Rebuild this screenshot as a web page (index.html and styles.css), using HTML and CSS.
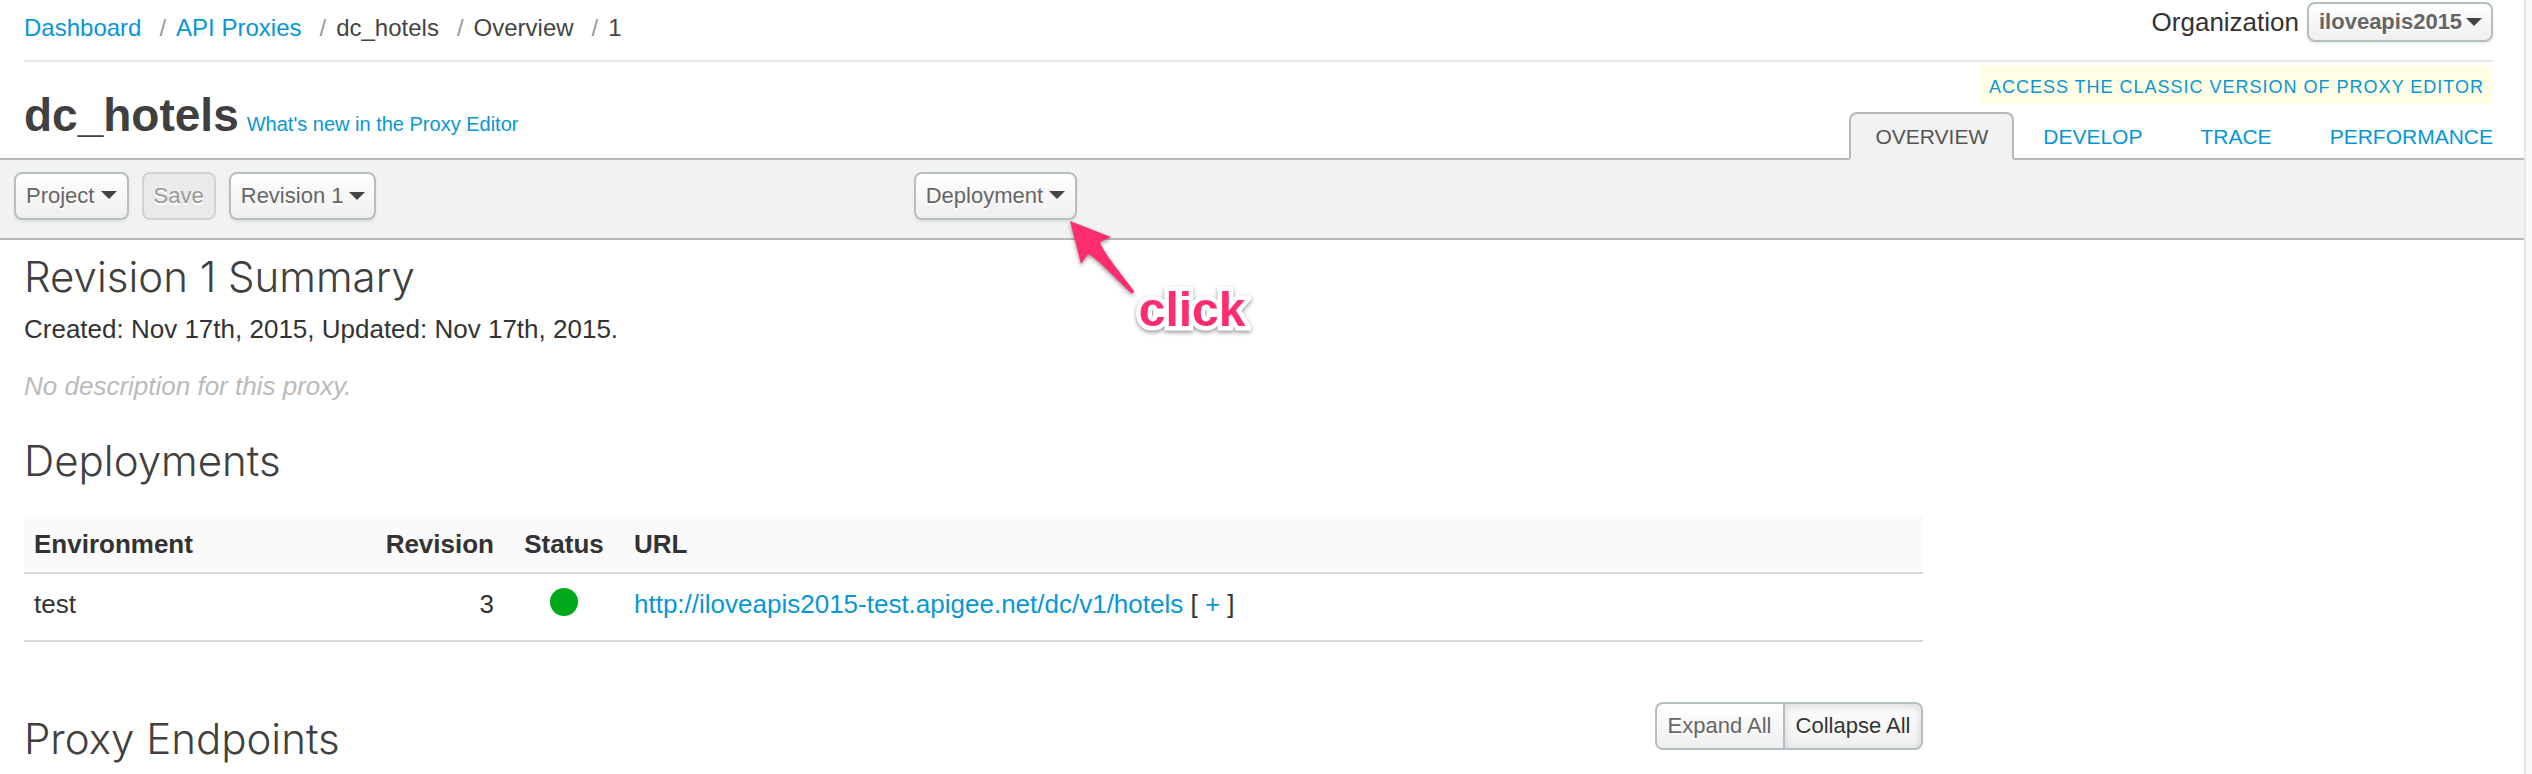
FILE: index.html
```html
<!DOCTYPE html>
<html lang="en">
<head>
<meta charset="utf-8">
<title>dc_hotels - Overview</title>
<link rel="stylesheet" href="styles.css">
</head>
<body>
<div class="page">
  <header class="header">
    <div class="topbar">
      <nav aria-label="Breadcrumb">
        <ol class="breadcrumb">
          <li><a href="#">Dashboard</a></li>
          <li><a href="#">API Proxies</a></li>
          <li>dc_hotels</li>
          <li>Overview</li>
          <li>1</li>
        </ol>
      </nav>
      <div class="org">
        <label for="org">Organization</label>
        <span class="picker">
          <select id="org" class="btn btn-small"><option>iloveapis2015</option></select>
          <svg class="caret" viewBox="0 0 16 8" aria-hidden="true"><path d="M0 0h16L8 8z"/></svg>
        </span>
      </div>
    </div>
    <div class="titlebar">
      <div class="title">
        <h1>dc_hotels</h1>
        <a href="#">What's new in the Proxy Editor</a>
      </div>
      <div class="views">
        <a class="classic" href="#">Access the classic version of proxy editor</a>
        <nav class="tabs" aria-label="Views">
          <a class="tab tab-active" href="#" aria-current="page">Overview</a>
          <a class="tab" href="#">Develop</a>
          <a class="tab" href="#">Trace</a>
          <a class="tab" href="#">Performance</a>
        </nav>
      </div>
    </div>
  </header>

  <div class="toolbar">
    <div class="tools">
      <button class="btn" type="button" aria-haspopup="menu">Project <svg class="caret" viewBox="0 0 16 8" aria-hidden="true"><path d="M0 0h16L8 8z"/></svg></button>
      <button class="btn" type="button" disabled>Save</button>
      <span class="picker">
        <select class="btn" aria-label="Revision"><option>Revision 1</option></select>
        <svg class="caret" viewBox="0 0 16 8" aria-hidden="true"><path d="M0 0h16L8 8z"/></svg>
      </span>
    </div>
    <div class="deploy">
      <button class="btn" type="button" aria-haspopup="menu">Deployment <svg class="caret" viewBox="0 0 16 8" aria-hidden="true"><path d="M0 0h16L8 8z"/></svg></button>
      <div class="hint">
        <svg class="arrow" viewBox="0 0 66 74" aria-hidden="true"><path d="M0 0L41 16L30 21C33 31 52 54 64 70Q64 73 61 72C50 62 26 36 18 33L11 43Z"/></svg>
        <span class="hint-text">click</span>
      </div>
    </div>
  </div>

  <main class="content">
    <section>
      <h2>Revision 1 Summary</h2>
      <p class="dates">Created: Nov 17th, 2015, Updated: Nov 17th, 2015.</p>
      <p class="empty">No description for this proxy.</p>
    </section>
    <section class="deployments">
      <h2>Deployments</h2>
      <table class="table">
        <thead>
          <tr><th class="env" scope="col">Environment</th><th class="rev" scope="col">Revision</th><th class="status" scope="col">Status</th><th scope="col">URL</th></tr>
        </thead>
        <tbody>
          <tr>
            <td>test</td>
            <td class="rev">3</td>
            <td class="status"><span class="dot" role="img" aria-label="Deployed"></span></td>
            <td><a href="#">http://iloveapis2015-test.apigee.net/dc/v1/hotels</a> [ <a href="#">+</a> ]</td>
          </tr>
        </tbody>
      </table>
    </section>
    <section class="endpoints">
      <h2>Proxy Endpoints</h2>
      <div class="group">
        <button class="btn" type="button">Expand All</button>
        <button class="btn btn-pressed" type="button" aria-pressed="true">Collapse All</button>
      </div>
    </section>
  </main>
</div>
</body>
</html>
```
FILE: styles.css
```css
* {
  box-sizing: border-box;
}

body {
  margin: 0;
  background: #fafafa;
  color: #333;
  font: 26px/36px "Liberation Sans", Arial, sans-serif;
}

a {
  color: #0896d6;
  text-decoration: none;
}

h1,
h2,
p {
  margin: 0;
}

h1 {
  color: #404040;
  font-size: 46px;
  line-height: 54px;
}

h2 {
  color: #404040;
  font-family: Inter, "Liberation Sans", sans-serif;
  font-size: 42px;
  font-weight: 300;
  line-height: 50px;
}

.page {
  min-height: 100vh;
  margin-right: 6px;
  border-right: 2px solid #e6e6e6;
  background: #fff;
}

.header {
  padding: 0 31px 0 24px;
}

.topbar {
  display: flex;
  justify-content: space-between;
  align-items: flex-start;
  padding: 2px 0 16px;
  border-bottom: 2px solid #e9e9e9;
}

.breadcrumb {
  display: flex;
  margin: 0;
  padding: 10px 0 0;
  color: #444;
  font-size: 24px;
  line-height: 32px;
  list-style: none;
}

.breadcrumb li + li::before {
  content: "/";
  margin: 0 10px 0 18px;
  color: #999;
}

.org {
  display: flex;
  align-items: center;
  gap: 8px;
}

.btn {
  height: 48px;
  margin: 0;
  padding: 0 10px;
  border: 2px solid #b4bfc4;
  border-radius: 8px;
  background: linear-gradient(#fff, #efefef);
  box-shadow: 0 2px 3px rgba(0, 0, 0, 0.08);
  color: #666;
  font: 22px/30px "Liberation Sans", Arial, sans-serif;
  text-shadow: 0 2px 0 #fff;
  appearance: none;
}

.btn:disabled {
  border-color: #cdd3d6;
  background: #eaeaea;
  box-shadow: none;
  color: #999;
}

.btn-small {
  height: 40px;
  font-weight: bold;
}

.caret {
  width: 16px;
  height: 8px;
  margin-bottom: 4px;
  fill: #444;
}

.picker {
  display: flex;
  position: relative;
}

.picker .btn {
  padding-right: 30px;
}

.picker .btn-small {
  padding-right: 28px;
}

.picker .caret {
  position: absolute;
  top: calc(50% - 4px);
  right: 11px;
  margin: 0;
  pointer-events: none;
}

.titlebar {
  display: flex;
  justify-content: space-between;
  align-items: flex-end;
}

.title {
  display: flex;
  align-items: baseline;
  gap: 8px;
  padding-bottom: 16px;
  font-size: 20px;
}

.views {
  display: flex;
  flex-direction: column;
  align-items: flex-end;
  gap: 8px;
  margin: 4px 0 -2px;
}

.classic {
  padding: 7px 9px 3px;
  background: #fffde6;
  font-size: 18px;
  letter-spacing: 1px;
  line-height: 28px;
  text-transform: uppercase;
}

.tabs {
  display: flex;
}

.tab {
  padding: 10px 29px 8px;
  font-size: 21px;
  line-height: 30px;
  text-transform: uppercase;
}

.tab:last-child {
  padding-right: 0;
}

.tab-active {
  position: relative;
  padding: 8px 24px 6px;
  border: 2px solid #b8b8b8;
  border-bottom-color: #f2f2f2;
  border-radius: 8px 8px 0 0;
  background: #f2f2f2;
  color: #555;
}

.toolbar {
  display: grid;
  grid-template-columns: 36.2% 1fr;
  padding: 12px 0 18px;
  border: solid #b8b8b8;
  border-width: 2px 0;
  background: #f2f2f2;
}

.tools {
  display: flex;
  gap: 13px;
  padding-left: 14px;
}

.deploy {
  position: relative;
  display: flex;
}

/* Callout drawn over the toolbar and the page below it */
.hint {
  position: absolute;
  top: 49px;
  left: 156px;
  padding: 74px 0 0 69px;
}

.arrow {
  position: absolute;
  top: 0;
  left: 0;
  width: 66px;
  height: 74px;
  overflow: visible;
  fill: #ff2d6e;
  filter: drop-shadow(0 2px 2px rgba(0, 0, 0, 0.4));
}

.hint-text {
  display: block;
  color: #ff2d6e;
  font-size: 48px;
  font-weight: bold;
  line-height: 30px;
  paint-order: stroke fill;
  -webkit-text-stroke: 9px #fff;
  filter: drop-shadow(0 2px 2px rgba(0, 0, 0, 0.4));
}

.content {
  width: 77%;
  padding: 12px 20px 0 24px;
}

.dates {
  margin-top: 9px;
}

.empty {
  margin-top: 21px;
  color: #bbb;
  font-style: italic;
}

.deployments {
  margin-top: 32px;
}

.table {
  width: 100%;
  margin-top: 30px;
  border-collapse: separate;
  border-spacing: 0;
  text-align: left;
}

.table th,
.table td {
  border-bottom: 2px solid #d9d9d9;
  vertical-align: top;
}

.table th {
  padding: 10px 20px 10px 10px;
  background: #fafafa;
}

.table td {
  padding: 12px 20px 18px 10px;
}

.table .env {
  width: 350px;
}

.table .rev {
  width: 140px;
  text-align: right;
}

.table .status {
  width: 110px;
  text-align: center;
}

.dot {
  display: inline-block;
  width: 28px;
  height: 28px;
  margin-top: 2px;
  border-radius: 50%;
  background: #00a81c;
  vertical-align: top;
}

.endpoints {
  display: flex;
  justify-content: space-between;
  align-items: flex-start;
  margin-top: 60px;
}

.endpoints h2 {
  padding-top: 12px;
}

.group {
  display: flex;
}

.group .btn {
  padding: 0 11px;
  box-shadow: none;
}

.group .btn:first-child {
  border-right: 0;
  border-radius: 8px 0 0 8px;
}

.group .btn:last-child {
  border-radius: 0 8px 8px 0;
}

.group .btn-pressed {
  box-shadow: inset 0 3px 8px rgba(0, 0, 0, 0.15);
  color: #333;
}
```
